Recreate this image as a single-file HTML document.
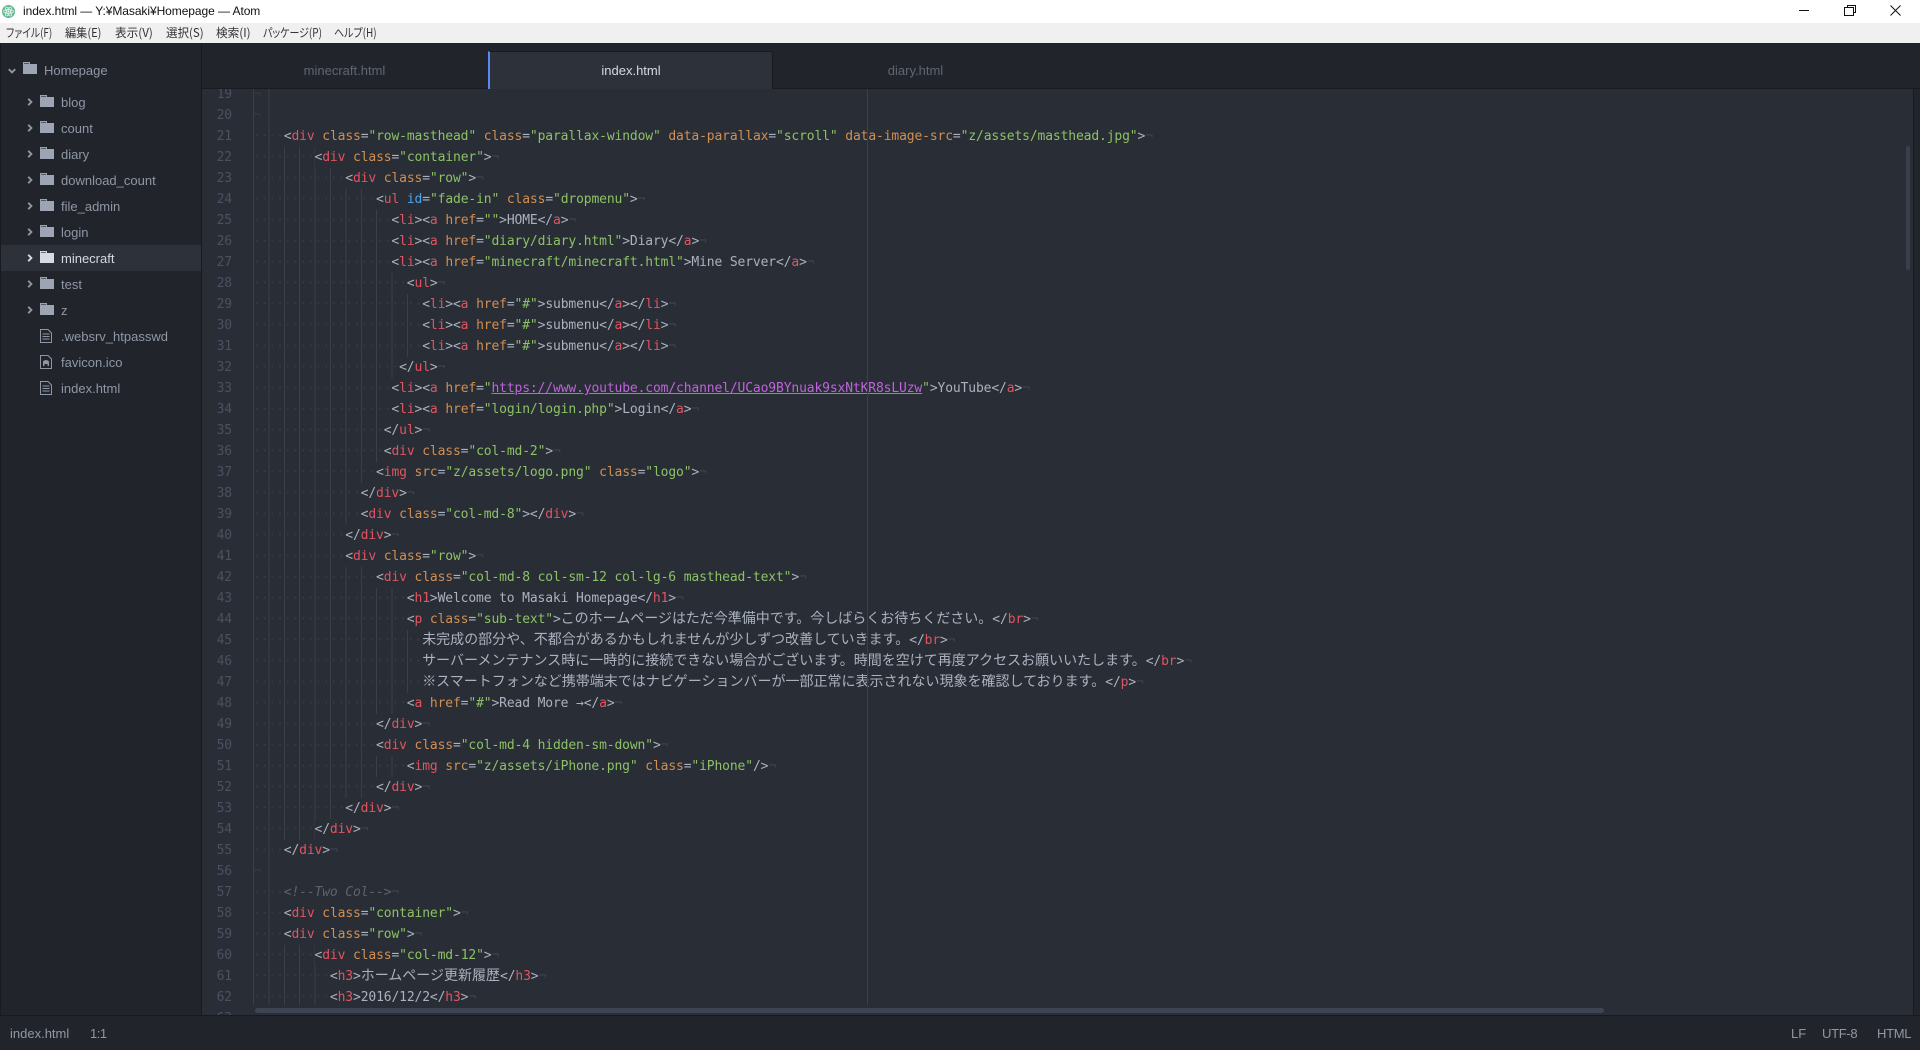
<!DOCTYPE html>
<html lang="ja"><head><meta charset="utf-8"><title>index.html — Atom</title>
<style>
html,body{margin:0;padding:0;width:1920px;height:1050px;overflow:hidden;background:#21252b}
body{font-family:"Liberation Sans","Noto Sans CJK JP",sans-serif;position:relative}
div,span{box-sizing:border-box}
.abs,.m,.tab,.row,.row svg{position:absolute}
#title{left:0;top:0;width:1920px;height:23px;background:#fff;color:#111;font-size:12px;line-height:22px;position:absolute}
#menu{left:0;top:23px;width:1920px;height:20px;background:#f0f0f0;position:absolute}
.m{top:0;line-height:20px;font-size:12px;color:#333;font-family:"Noto Sans CJK JP","Liberation Sans",sans-serif;font-feature-settings:"palt";white-space:nowrap;transform-origin:left center}
#side{position:absolute;left:0;top:43px;width:202px;height:972px;background:#21252b;border-left:1px solid #181a1f;border-right:1px solid #181a1f}
.row{left:0;width:200px;height:26px;line-height:27px;font-size:13px;color:#8f97a6;white-space:nowrap}
.row.sel{background:#2c313a;color:#d7dae0}
.row b{position:absolute;left:60px;font-weight:normal}
#tabs{position:absolute;left:202px;top:43px;width:1718px;height:46px;background:#21252b;border-bottom:1px solid #181a1f}
.tab{top:8px;width:285px;height:38px;line-height:39px;text-align:center;font-size:13px;color:#5f6673}
.tab.on{background:#2c313a;color:#d7dae0;border-left:2px solid #568af2;border-right:1px solid #181a1f;border-top:1px solid #181a1f;height:38px;line-height:37px;border-radius:0 3px 0 0}
#ed{position:absolute;left:202px;top:89px;width:1711px;height:926px;background:#292d36;overflow:hidden}
#gut{position:absolute;left:0;top:-5px;width:30px;text-align:right;color:#495162;font:13px/21px "DejaVu Sans Mono",monospace;letter-spacing:-.137px}
#gut div{height:21px}
#clip{position:absolute;left:0;top:0;width:1711px;height:916px;overflow:hidden}
#code{position:absolute;left:51px;top:-5px;color:#abb2bf;font:13px/21px "DejaVu Sans Mono",monospace;letter-spacing:-.137px}
#code>div{height:21px;white-space:pre}
.g{display:inline-block;height:21px;vertical-align:top;color:#363b46;background:repeating-linear-gradient(90deg,#3a3f4a 0,#3a3f4a 1px,transparent 1px,transparent 15.4px)}
.e{color:#3e4451}
i{font-style:normal}
.t{color:#e05561}.a{color:#d18f52}.s{color:#8cc265}.b{color:#4aa5f0}
.u{color:#c162de;text-decoration:underline}
.c{color:#5c6370;font-style:italic}
.j{font:14px/0 "Noto Sans CJK JP",sans-serif;letter-spacing:0;color:#abb2bf}
#wrap{position:absolute;left:665px;top:0;width:1px;height:916px;background:#3a3f4a}
#hs{position:absolute;left:53px;top:919px;width:1349px;height:5px;border-radius:3px;background:#3e4451}
#vs{position:absolute;left:1704px;top:57px;width:4px;height:124px;border-radius:2px;background:#3a3f4b}
#sb{position:absolute;left:0;top:1015px;width:1920px;height:35px;background:#21252b;border-top:1px solid #181a1f;color:#8f97a6;font-size:13px;line-height:35px}
#sb span{position:absolute;top:0}
#edge{position:absolute;left:1913px;top:89px;width:1px;height:926px;background:#181a1f}
</style></head><body>
<svg width="0" height="0" style="position:absolute"><defs>
<symbol id="fo" viewBox="0 0 14 12"><path d="M0 0H7V2H14V12H0Z" fill="currentColor"/><path d="M1 1H6V2H1Z" fill="#21252b" opacity=".6"/></symbol>
<symbol id="ch" viewBox="0 0 6 8"><path d="M1.2 .8L4.4 4L1.2 7.2" fill="none" stroke="currentColor" stroke-width="1.9"/></symbol>
<symbol id="fi" viewBox="0 0 12 14"><path d="M.5 .5H8L11.5 4V13.5H.5Z" fill="none" stroke="currentColor"/><path d="M2.5 5H9.5M2.5 7.500H9.500M2.500 10H9.500" stroke="currentColor"/></symbol>
<symbol id="im" viewBox="0 0 12 14"><path d="M.5 .5H8L11.500 4V13.500H.5Z" fill="none" stroke="currentColor"/><path d="M3 11V7C3 4.500 9 4.500 9 7V11H7.500V9H4.500V11Z" fill="currentColor"/></symbol>
</defs></svg>

<div id="title">
<svg style="position:absolute;left:2px;top:5px" width="13" height="13" viewBox="0 0 13 13"><circle cx="6.500" cy="6.500" r="6.500" fill="#5fb58f"/><g fill="none" stroke="#d8efe4" stroke-width=".9"><ellipse cx="6.500" cy="6.500" rx="5" ry="2"/><ellipse cx="6.500" cy="6.500" rx="5" ry="2" transform="rotate(60 6.500 6.500)"/><ellipse cx="6.500" cy="6.500" rx="5" ry="2" transform="rotate(120 6.500 6.500)"/></g><circle cx="6.500" cy="6.500" r="1" fill="#fff"/></svg>
<span style="position:absolute;left:23px;top:0;white-space:nowrap;letter-spacing:-.07px">index.html — Y:¥Masaki¥Homepage — Atom</span>
<svg style="position:absolute;left:1795px;top:0" width="120" height="20" viewBox="0 0 120 20" fill="none" stroke="#111"><path d="M4 10.500H14"/><path d="M49.500 7.500H58.500V15.500H49.500Z"/><path d="M52.500 7V5.500H60.500V12.500H59"/><path d="M95.500 5.500L105.500 15.500M105.500 5.500L95.500 15.500"/></svg>
</div>
<div id="menu">
<span class="m" style="left:6px;transform:scaleX(.82)">ファイル(F)</span>
<span class="m" style="left:65px;transform:scaleX(.93)">編集(E)</span>
<span class="m" style="left:115px;transform:scaleX(.97)">表示(V)</span>
<span class="m" style="left:166px;transform:scaleX(.96)">選択(S)</span>
<span class="m" style="left:216px;transform:scaleX(.97)">検索(I)</span>
<span class="m" style="left:263px;transform:scaleX(.83)">パッケージ(P)</span>
<span class="m" style="left:334px;transform:scaleX(.83)">ヘルプ(H)</span>
</div>

<div id="side">
<div class="row" style="top:14px"><svg style="left:8px;top:10px;transform:rotate(90deg);color:#8f97a6" width="6" height="8"><use href="#ch"/></svg><svg style="left:22px;top:5px;color:#9da5b4" width="14" height="12"><use href="#fo"/></svg><b style="left:43px">Homepage</b></div>
<div class="row" style="top:46px"><svg style="left:26px;top:9px" width="6" height="8"><use href="#ch"/></svg><svg style="left:39px;top:6px;color:#9da5b4" width="14" height="12"><use href="#fo"/></svg><b>blog</b></div>
<div class="row" style="top:72px"><svg style="left:26px;top:9px" width="6" height="8"><use href="#ch"/></svg><svg style="left:39px;top:6px;color:#9da5b4" width="14" height="12"><use href="#fo"/></svg><b>count</b></div>
<div class="row" style="top:98px"><svg style="left:26px;top:9px" width="6" height="8"><use href="#ch"/></svg><svg style="left:39px;top:6px;color:#9da5b4" width="14" height="12"><use href="#fo"/></svg><b>diary</b></div>
<div class="row" style="top:124px"><svg style="left:26px;top:9px" width="6" height="8"><use href="#ch"/></svg><svg style="left:39px;top:6px;color:#9da5b4" width="14" height="12"><use href="#fo"/></svg><b>download_count</b></div>
<div class="row" style="top:150px"><svg style="left:26px;top:9px" width="6" height="8"><use href="#ch"/></svg><svg style="left:39px;top:6px;color:#9da5b4" width="14" height="12"><use href="#fo"/></svg><b>file_admin</b></div>
<div class="row" style="top:176px"><svg style="left:26px;top:9px" width="6" height="8"><use href="#ch"/></svg><svg style="left:39px;top:6px;color:#9da5b4" width="14" height="12"><use href="#fo"/></svg><b>login</b></div>
<div class="row sel" style="top:202px"><svg style="left:26px;top:9px" width="6" height="8"><use href="#ch"/></svg><svg style="left:39px;top:6px;color:#d7dae0" width="14" height="12"><use href="#fo"/></svg><b>minecraft</b></div>
<div class="row" style="top:228px"><svg style="left:26px;top:9px" width="6" height="8"><use href="#ch"/></svg><svg style="left:39px;top:6px;color:#9da5b4" width="14" height="12"><use href="#fo"/></svg><b>test</b></div>
<div class="row" style="top:254px"><svg style="left:26px;top:9px" width="6" height="8"><use href="#ch"/></svg><svg style="left:39px;top:6px;color:#9da5b4" width="14" height="12"><use href="#fo"/></svg><b>z</b></div>
<div class="row" style="top:280px"><svg style="left:39px;top:6px;color:#8f97a6" width="12" height="14"><use href="#fi"/></svg><b>.websrv_htpasswd</b></div>
<div class="row" style="top:306px"><svg style="left:39px;top:6px;color:#8f97a6" width="12" height="14"><use href="#im"/></svg><b>favicon.ico</b></div>
<div class="row" style="top:332px"><svg style="left:39px;top:6px;color:#8f97a6" width="12" height="14"><use href="#fi"/></svg><b>index.html</b></div>
</div>

<div id="tabs">
<div class="tab" style="left:0">minecraft.html</div>
<div class="tab on" style="left:286px">index.html</div>
<div class="tab" style="left:571px">diary.html</div>
</div>

<div id="ed">
<div id="gut"><div>19</div><div>20</div><div>21</div><div>22</div><div>23</div><div>24</div><div>25</div><div>26</div><div>27</div><div>28</div><div>29</div><div>30</div><div>31</div><div>32</div><div>33</div><div>34</div><div>35</div><div>36</div><div>37</div><div>38</div><div>39</div><div>40</div><div>41</div><div>42</div><div>43</div><div>44</div><div>45</div><div>46</div><div>47</div><div>48</div><div>49</div><div>50</div><div>51</div><div>52</div><div>53</div><div>54</div><div>55</div><div>56</div><div>57</div><div>58</div><div>59</div><div>60</div><div>61</div><div>62</div><div>63</div></div>
<div id="clip">
<div id="code">
<div><span class="g" style="width:30.800px">¬</span></div>
<div><span class="g" style="width:30.800px">¬</span></div>
<div><span class="g">····</span>&lt;<i class="t">div</i> <i class="a">class</i>=<i class="s">"row-masthead"</i> <i class="a">class</i>=<i class="s">"parallax-window"</i> <i class="a">data-parallax</i>=<i class="s">"scroll"</i> <i class="a">data-image-src</i>=<i class="s">"z/assets/masthead.jpg"</i>&gt;<i class="e">¬</i></div>
<div><span class="g">········</span>&lt;<i class="t">div</i> <i class="a">class</i>=<i class="s">"container"</i>&gt;<i class="e">¬</i></div>
<div><span class="g">············</span>&lt;<i class="t">div</i> <i class="a">class</i>=<i class="s">"row"</i>&gt;<i class="e">¬</i></div>
<div><span class="g">················</span>&lt;<i class="t">ul</i> <i class="b">id</i>=<i class="s">"fade-in"</i> <i class="a">class</i>=<i class="s">"dropmenu"</i>&gt;<i class="e">¬</i></div>
<div><span class="g">··················</span>&lt;<i class="t">li</i>&gt;&lt;<i class="t">a</i> <i class="a">href</i>=<i class="s">""</i>&gt;HOME&lt;/<i class="t">a</i>&gt;<i class="e">¬</i></div>
<div><span class="g">··················</span>&lt;<i class="t">li</i>&gt;&lt;<i class="t">a</i> <i class="a">href</i>=<i class="s">"diary/diary.html"</i>&gt;Diary&lt;/<i class="t">a</i>&gt;<i class="e">¬</i></div>
<div><span class="g">··················</span>&lt;<i class="t">li</i>&gt;&lt;<i class="t">a</i> <i class="a">href</i>=<i class="s">"minecraft/minecraft.html"</i>&gt;Mine Server&lt;/<i class="t">a</i>&gt;<i class="e">¬</i></div>
<div><span class="g">····················</span>&lt;<i class="t">ul</i>&gt;<i class="e">¬</i></div>
<div><span class="g">······················</span>&lt;<i class="t">li</i>&gt;&lt;<i class="t">a</i> <i class="a">href</i>=<i class="s">"#"</i>&gt;submenu&lt;/<i class="t">a</i>&gt;&lt;/<i class="t">li</i>&gt;<i class="e">¬</i></div>
<div><span class="g">······················</span>&lt;<i class="t">li</i>&gt;&lt;<i class="t">a</i> <i class="a">href</i>=<i class="s">"#"</i>&gt;submenu&lt;/<i class="t">a</i>&gt;&lt;/<i class="t">li</i>&gt;<i class="e">¬</i></div>
<div><span class="g">······················</span>&lt;<i class="t">li</i>&gt;&lt;<i class="t">a</i> <i class="a">href</i>=<i class="s">"#"</i>&gt;submenu&lt;/<i class="t">a</i>&gt;&lt;/<i class="t">li</i>&gt;<i class="e">¬</i></div>
<div><span class="g">···················</span>&lt;/<i class="t">ul</i>&gt;<i class="e">¬</i></div>
<div><span class="g">··················</span>&lt;<i class="t">li</i>&gt;&lt;<i class="t">a</i> <i class="a">href</i>=<i class="s">"</i><i class="u">https://www.youtube.com/channel/UCao9BYnuak9sxNtKR8sLUzw</i><i class="s">"</i>&gt;YouTube&lt;/<i class="t">a</i>&gt;<i class="e">¬</i></div>
<div><span class="g">··················</span>&lt;<i class="t">li</i>&gt;&lt;<i class="t">a</i> <i class="a">href</i>=<i class="s">"login/login.php"</i>&gt;Login&lt;/<i class="t">a</i>&gt;<i class="e">¬</i></div>
<div><span class="g">·················</span>&lt;/<i class="t">ul</i>&gt;<i class="e">¬</i></div>
<div><span class="g">·················</span>&lt;<i class="t">div</i> <i class="a">class</i>=<i class="s">"col-md-2"</i>&gt;<i class="e">¬</i></div>
<div><span class="g">················</span>&lt;<i class="t">img</i> <i class="a">src</i>=<i class="s">"z/assets/logo.png"</i> <i class="a">class</i>=<i class="s">"logo"</i>&gt;<i class="e">¬</i></div>
<div><span class="g">··············</span>&lt;/<i class="t">div</i>&gt;<i class="e">¬</i></div>
<div><span class="g">··············</span>&lt;<i class="t">div</i> <i class="a">class</i>=<i class="s">"col-md-8"</i>&gt;&lt;/<i class="t">div</i>&gt;<i class="e">¬</i></div>
<div><span class="g">············</span>&lt;/<i class="t">div</i>&gt;<i class="e">¬</i></div>
<div><span class="g">············</span>&lt;<i class="t">div</i> <i class="a">class</i>=<i class="s">"row"</i>&gt;<i class="e">¬</i></div>
<div><span class="g">················</span>&lt;<i class="t">div</i> <i class="a">class</i>=<i class="s">"col-md-8 col-sm-12 col-lg-6 masthead-text"</i>&gt;<i class="e">¬</i></div>
<div><span class="g">····················</span>&lt;<i class="t">h1</i>&gt;Welcome to Masaki Homepage&lt;/<i class="t">h1</i>&gt;<i class="e">¬</i></div>
<div><span class="g">····················</span>&lt;<i class="t">p</i> <i class="a">class</i>=<i class="s">"sub-text"</i>&gt;<span class="j">このホームページはただ今準備中です。今しばらくお待ちください。</span>&lt;/<i class="t">br</i>&gt;<i class="e">¬</i></div>
<div><span class="g">······················</span><span class="j">未完成の部分や、不都合があるかもしれませんが少しずつ改善していきます。</span>&lt;/<i class="t">br</i>&gt;<i class="e">¬</i></div>
<div><span class="g">······················</span><span class="j">サーバーメンテナンス時に一時的に接続できない場合がございます。時間を空けて再度アクセスお願いいたします。</span>&lt;/<i class="t">br</i>&gt;<i class="e">¬</i></div>
<div><span class="g">······················</span><span class="j">※スマートフォンなど携帯端末ではナビゲーションバーが一部正常に表示されない現象を確認しております。</span>&lt;/<i class="t">p</i>&gt;<i class="e">¬</i></div>
<div><span class="g">····················</span>&lt;<i class="t">a</i> <i class="a">href</i>=<i class="s">"#"</i>&gt;Read More →&lt;/<i class="t">a</i>&gt;<i class="e">¬</i></div>
<div><span class="g">················</span>&lt;/<i class="t">div</i>&gt;<i class="e">¬</i></div>
<div><span class="g">················</span>&lt;<i class="t">div</i> <i class="a">class</i>=<i class="s">"col-md-4 hidden-sm-down"</i>&gt;<i class="e">¬</i></div>
<div><span class="g">····················</span>&lt;<i class="t">img</i> <i class="a">src</i>=<i class="s">"z/assets/iPhone.png"</i> <i class="a">class</i>=<i class="s">"iPhone"</i>/&gt;<i class="e">¬</i></div>
<div><span class="g">················</span>&lt;/<i class="t">div</i>&gt;<i class="e">¬</i></div>
<div><span class="g">············</span>&lt;/<i class="t">div</i>&gt;<i class="e">¬</i></div>
<div><span class="g">········</span>&lt;/<i class="t">div</i>&gt;<i class="e">¬</i></div>
<div><span class="g">····</span>&lt;/<i class="t">div</i>&gt;<i class="e">¬</i></div>
<div><span class="g" style="width:30.800px">¬</span></div>
<div><span class="g">····</span><i class="c">&lt;!--Two Col--&gt;</i><i class="e">¬</i></div>
<div><span class="g">····</span>&lt;<i class="t">div</i> <i class="a">class</i>=<i class="s">"container"</i>&gt;<i class="e">¬</i></div>
<div><span class="g">····</span>&lt;<i class="t">div</i> <i class="a">class</i>=<i class="s">"row"</i>&gt;<i class="e">¬</i></div>
<div><span class="g">········</span>&lt;<i class="t">div</i> <i class="a">class</i>=<i class="s">"col-md-12"</i>&gt;<i class="e">¬</i></div>
<div><span class="g">··········</span>&lt;<i class="t">h3</i>&gt;<span class="j">ホームページ更新履歴</span>&lt;/<i class="t">h3</i>&gt;<i class="e">¬</i></div>
<div><span class="g">··········</span>&lt;<i class="t">h3</i>&gt;2016/12/2&lt;/<i class="t">h3</i>&gt;<i class="e">¬</i></div>
</div>
</div>
<div id="wrap"></div>
<div id="hs"></div>
<div id="vs"></div>
</div>
<div id="edge"></div>

<div id="sb">
<span style="left:10px">index.html</span>
<span style="left:90px;letter-spacing:-.5px">1:1</span>
<span style="left:1791px">LF</span>
<span style="left:1822px;letter-spacing:-.3px">UTF-8</span>
<span style="left:1877px;letter-spacing:-.3px">HTML</span>
</div>
</body></html>
